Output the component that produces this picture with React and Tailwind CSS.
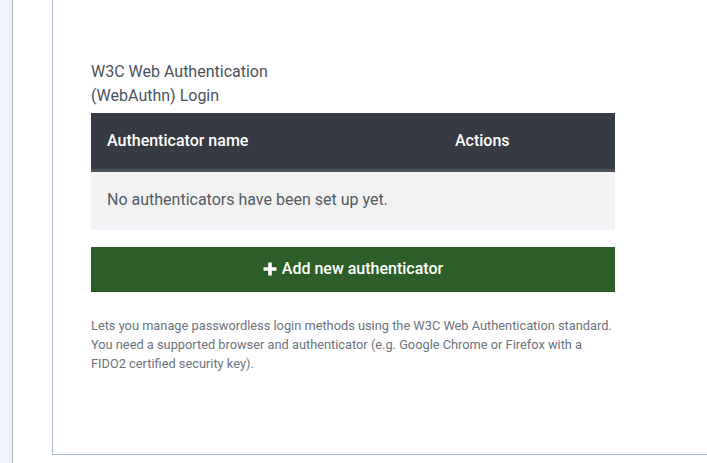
import React from 'react';

const font = { fontFamily: 'Roboto, "Liberation Sans", sans-serif' };

function PlusIcon() {
  return (
    <svg width="14" height="14" viewBox="0 0 14 14" className="shrink-0">
      <path d="M5.2 0.5h3.6v4.7h4.7v3.6H8.8v4.7H5.2V8.8H0.5V5.2h4.7z" fill="currentColor" />
    </svg>
  );
}

export default function App() {
  return (
    <div className="flex h-[463px] w-[707px] overflow-hidden bg-white" style={font}>
      {/* sidebar edge */}
      <div className="w-[13px] shrink-0 border-r border-[#aab9cc] bg-[#eef3fc]" />

      <div className="flex-1 pl-[39px]">
        <div className="h-[455px] border-b border-l border-[#aab9cc] pl-[38px] pt-[60px]">
          <div className="w-[524px]">
            <h3 className="text-[16px] leading-[24px] text-[#4a5260]">
              W3C Web Authentication
              <br />
              (WebAuthn) Login
            </h3>

            {/* authenticator table */}
            <div className="mt-[5px]">
              <div className="flex h-[59px] items-center border-b-[3px] border-[#4b5059] bg-[#363a42] text-[16px] font-medium text-white">
                <div className="w-[348px] pl-4">Authenticator name</div>
                <div className="pl-4">Actions</div>
              </div>
              <div className="flex h-[58px] items-center border-b-2 border-[#eef4fb] bg-[#f2f2f2] pl-4 text-[16px] text-[#535a64]">
                No authenticators have been set up yet.
              </div>
            </div>

            <button className="mt-[17px] flex h-[45px] w-full items-center justify-center gap-[5px] border-b border-[#24501f] bg-[#2c5f27] text-[16px] font-medium text-white">
              <PlusIcon />
              Add new authenticator
            </button>

            <p className="mt-[24px] text-[12.8px] leading-[19px] text-[#6c737d]">
              Lets you manage passwordless login methods using the W3C Web Authentication standard.
              You need a supported browser and authenticator (e.g. Google Chrome or Firefox with a
              FIDO2 certified security key).
            </p>
          </div>
        </div>
      </div>
    </div>
  );
}
